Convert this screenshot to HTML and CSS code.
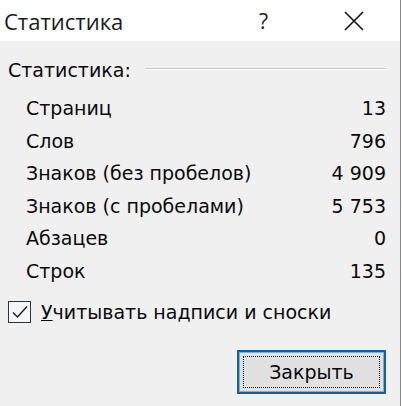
FILE: index.html
```html
<!DOCTYPE html>
<html lang="ru">
  <head>
    <meta charset="UTF-8" />
    <title>Статистика</title>
    <link rel="stylesheet" href="styles.css">
  </head>
  <body>
    <div class="dialog">
      <header class="titlebar">
        <span class="title">Статистика</span>
        <span class="help">?</span>
        <span class="close">
          <svg width="20" height="20" viewBox="0 0 20 20">
            <path d="M1 1 L19 19 M19 1 L1 19" stroke="#111" stroke-width="1.6" fill="none" />
          </svg>
        </span>
      </header>

      <main class="content">
        <div class="group-head">
          <span>Статистика:</span>
          <span class="rule"></span>
        </div>

        <ul class="stats">
          <li><span>Страниц</span><span>13</span></li>
          <li><span>Слов</span><span>796</span></li>
          <li><span>Знаков (без пробелов)</span><span>4 909</span></li>
          <li><span>Знаков (с пробелами)</span><span>5 753</span></li>
          <li><span>Абзацев</span><span>0</span></li>
          <li><span>Строк</span><span>135</span></li>
        </ul>

        <label class="check">
          <span class="box">
            <svg width="16" height="14" viewBox="0 0 16 14">
              <path d="M1 7.5 L5.5 12 L15 1.5" stroke="#222" stroke-width="1.5" fill="none" />
            </svg>
          </span>
          <span><u>У</u>читывать надписи и сноски</span>
        </label>

        <div class="actions">
          <button class="btn"><span class="focus">Закрыть</span></button>
        </div>
      </main>
    </div>
  </body>
</html>
```

FILE: styles.css
```css
* {
  margin: 0;
  padding: 0;
  box-sizing: border-box;
}

body {
  background-color: #ffffff;
  font-family: "DejaVu Sans", sans-serif;
  color: #0a0a0a;
  width: 402px;
  height: 406px;
  overflow: hidden;
}

.dialog {
  width: 401px;
  height: 406px;
  border-right: 1px solid #8a8a8a;
  display: flex;
  flex-direction: column;
}

.titlebar {
  height: 41px;
  background-color: #ffffff;
  display: flex;
  align-items: center;
  font-family: "Open Sans", sans-serif;
}

.title {
  font-size: 22px;
  padding-left: 4px;
  margin-right: auto;
  color: #1a1a1a;
}

.help {
  font-size: 21px;
  margin-right: 76px;
  color: #1a1a1a;
}

.close {
  display: flex;
  margin-right: 36px;
}

.content {
  flex: 1;
  background-color: #f0f0f0;
  padding: 17px 14px 0 8px;
  font-size: 19px;
}

.group-head {
  display: flex;
  align-items: center;
  gap: 14px;
  height: 24px;
}

.group-head .rule {
  flex: 1;
  border-top: 1px solid #c8c8c8;
  border-bottom: 1px solid #ffffff;
  margin-top: -2px;
}

.stats {
  list-style: none;
  margin-top: 10px;
  padding-left: 18px;
}

.stats li {
  display: flex;
  justify-content: space-between;
  height: 32.6px;
  line-height: 32.6px;
}

.check {
  display: flex;
  align-items: center;
  gap: 10px;
  margin-top: 12px;
  height: 24px;
}

.check .box {
  width: 23px;
  height: 22px;
  border: 1px solid #333;
  background-color: #f4f8fb;
  display: flex;
  align-items: center;
  justify-content: center;
}

.actions {
  display: flex;
  justify-content: flex-end;
  margin-top: 26px;
  padding-right: 0;
}

.btn {
  width: 149px;
  height: 44px;
  background-color: #e1e1e1;
  border: 2px solid #1c5f92;
  box-shadow: inset 0 0 0 1px #6fb2e3;
  padding: 4px;
  font-family: "DejaVu Sans", sans-serif;
  font-size: 19px;
  color: #0a0a0a;
}

.btn .focus {
  display: flex;
  align-items: center;
  justify-content: center;
  height: 100%;
  border: 1px dotted #111;
}
```
